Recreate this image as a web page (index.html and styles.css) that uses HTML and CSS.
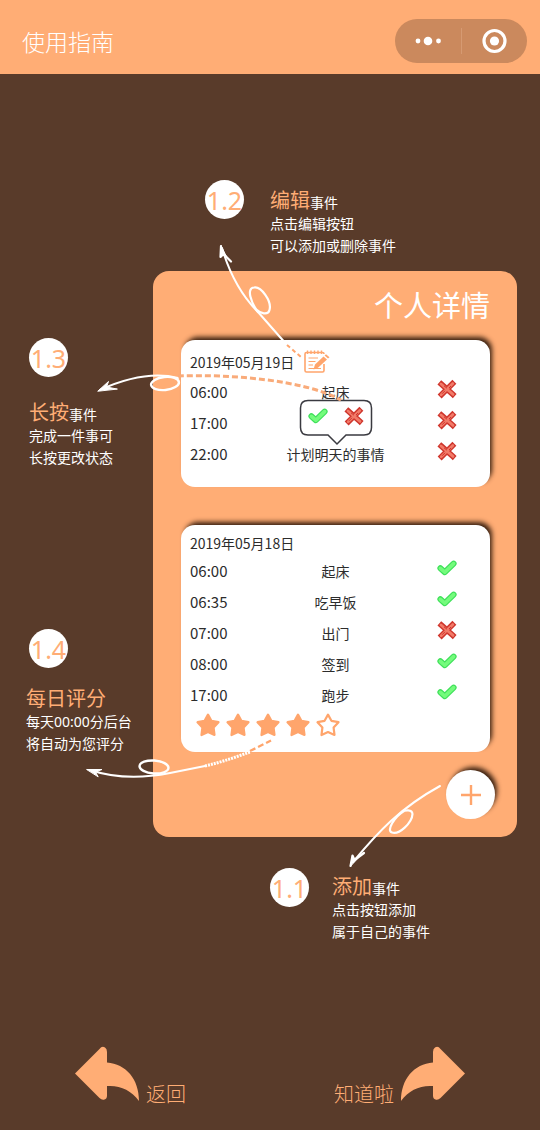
FILE: index.html
```html
<!DOCTYPE html>
<html lang="zh-CN">
<head>
<meta charset="utf-8">
<meta name="viewport" content="width=device-width, initial-scale=1">
<title>使用指南</title>
<link rel="stylesheet" href="styles.css">
</head>
<body>
<svg class="sprite" aria-hidden="true">
  <symbol id="check" viewBox="0 0 20 20">
    <path d="M3.4 10.3 7.8 14.2 16.6 5.6" fill="none" stroke="#3fe05a" stroke-width="6" stroke-linecap="round" stroke-linejoin="round"/>
    <path d="M3.4 10.3 7.8 14.2 16.6 5.6" fill="none" stroke="#74fb7c" stroke-width="3.6" stroke-linecap="round" stroke-linejoin="round"/>
  </symbol>
  <symbol id="cross" viewBox="0 0 20 20">
    <path d="M4.400 5.200 15.600 15.200M15.400 4.800 4.600 15.600" fill="none" stroke="#cf362d" stroke-width="5.600" stroke-linecap="square" stroke-linejoin="round"/>
    <path d="M4 5 16 15.400M15.800 4.600 4.200 15.800" fill="none" stroke="#f27a68" stroke-width="2.800" stroke-linecap="round"/>
    <path d="M7 6.800l3 2.400M5 14.800l3-3M12 9l2-2" fill="none" stroke="#cf362d" stroke-width="1"/>
  </symbol>
  <symbol id="star" viewBox="0 0 26 26">
    <path d="M13 2.600 16.400 8.800 23.500 10.200 18.600 15.600 19.500 23 13 20 6.500 23 7.400 15.600 2.500 10.200 9.600 8.800Z" stroke="#ffa56c" stroke-width="2.200" stroke-linejoin="round"/>
  </symbol>
  <symbol id="turn" viewBox="0 0 66 56">
    <path d="M1 27.500 25.500 3Q28-.500 31 1.500 33 2.500 33 6V16.500C52 18 65 33 65 55 57 44 46 39 33 40V49.500Q33 53 30.500 53.500 28 54.500 25.500 52Z" fill="#ffad75"/>
  </symbol>
</svg>

<header class="topbar">
  <h1 class="topbar-title">使用指南</h1>
  <div class="capsule">
    <button class="capsule-btn" type="button" aria-label="更多">
      <svg width="28" height="12" viewBox="0 0 28 12"><g fill="#fff"><circle cx="4" cy="6" r="2.400"/><circle cx="14" cy="6" r="4.300"/><circle cx="24.500" cy="6" r="2.400"/></g></svg>
    </button>
    <button class="capsule-btn" type="button" aria-label="关闭">
      <svg width="26" height="26" viewBox="0 0 26 26"><circle cx="13.500" cy="13" r="10.500" fill="none" stroke="#fff" stroke-width="3.200"/><circle cx="13.500" cy="13" r="4.600" fill="#fff"/></svg>
    </button>
  </div>
</header>

<main class="guide">
  <section class="hint hint-edit">
    <span class="badge">1.2</span>
    <div class="hint-text">
      <h2 class="hint-title">编辑<small>事件</small></h2>
      <p>点击编辑按钮</p>
      <p>可以添加或删除事件</p>
    </div>
  </section>

  <div class="stage">
    <div class="side">
      <section class="hint-stack hint-press">
        <span class="badge">1.3</span>
        <div class="hint-text">
          <h2 class="hint-title">长按<small>事件</small></h2>
          <p>完成一件事可</p>
          <p>长按更改状态</p>
        </div>
      </section>
      <section class="hint-stack hint-score">
        <span class="badge">1.4</span>
        <div class="hint-text">
          <h2 class="hint-title">每日评分</h2>
          <p>每天00:00分后台</p>
          <p>将自动为您评分</p>
        </div>
      </section>
    </div>

    <div class="panel">
      <h2 class="panel-title">个人详情</h2>

      <article class="card card-today">
        <div class="card-head">
          <time datetime="2019-05-19">2019年05月19日</time>
          <button class="edit" type="button" aria-label="编辑">
            <svg width="28" height="24" viewBox="0 0 28 24" fill="none" stroke="#ffa56c">
              <path d="M21 14V20.500Q21 22 19.500 22H3.500Q2 22 2 20.500V4Q2 2.500 3.500 2.500H19.500Q21 2.500 21 4" stroke-width="1.600"/>
              <path d="M4.500 .500V4M8 .500V4M11.500 .500V4M15 .500V4M18.500 .500V4" stroke-width="1.400"/>
              <path d="M5.500 8H15M5.500 11.500H12.500M5.500 15H10M5.500 18.500H18" stroke-width="1"/>
              <path d="M10.500 19.500 12 14.500 20.500 6.500 24 9.500 15 17.800ZM21.600 5.500 23 4.200 26.500 7.200 25 8.600Z" fill="#ffa56c" stroke="none"/>
            </svg>
          </button>
        </div>
        <table class="log">
          <tbody>
            <tr><td class="log-time">06:00</td><td class="log-name">起床</td><td class="log-mark"><svg role="img" aria-label="未完成"><use href="#cross"/></svg></td></tr>
            <tr><td class="log-time">17:00</td><td class="log-name">
              <div class="picker">
                <svg class="picker-frame" viewBox="0 0 74 50"><path d="M9 1.500H65Q72.500 1.500 72.500 9V28.500Q72.500 36 65 36H47L38 45 29 36H9Q1.500 36 1.500 28.500V9Q1.500 1.500 9 1.500Z" fill="#fff" stroke="#3a3a40" stroke-width="1.500"/></svg>
                <button class="picker-btn" type="button" aria-label="完成"><svg><use href="#check"/></svg></button>
                <button class="picker-btn" type="button" aria-label="未完成"><svg><use href="#cross"/></svg></button>
              </div>
            </td><td class="log-mark"><svg role="img" aria-label="未完成"><use href="#cross"/></svg></td></tr>
            <tr><td class="log-time">22:00</td><td class="log-name">计划明天的事情</td><td class="log-mark"><svg role="img" aria-label="未完成"><use href="#cross"/></svg></td></tr>
          </tbody>
        </table>
      </article>

      <article class="card card-past">
        <div class="card-head">
          <time datetime="2019-05-18">2019年05月18日</time>
        </div>
        <table class="log">
          <tbody>
            <tr><td class="log-time">06:00</td><td class="log-name">起床</td><td class="log-mark"><svg role="img" aria-label="完成"><use href="#check"/></svg></td></tr>
            <tr><td class="log-time">06:35</td><td class="log-name">吃早饭</td><td class="log-mark"><svg role="img" aria-label="完成"><use href="#check"/></svg></td></tr>
            <tr><td class="log-time">07:00</td><td class="log-name">出门</td><td class="log-mark"><svg role="img" aria-label="未完成"><use href="#cross"/></svg></td></tr>
            <tr><td class="log-time">08:00</td><td class="log-name">签到</td><td class="log-mark"><svg role="img" aria-label="完成"><use href="#check"/></svg></td></tr>
            <tr><td class="log-time">17:00</td><td class="log-name">跑步</td><td class="log-mark"><svg role="img" aria-label="完成"><use href="#check"/></svg></td></tr>
          </tbody>
        </table>
        <div class="stars" role="img" aria-label="4 / 5">
          <svg class="star"><use href="#star"/></svg>
          <svg class="star"><use href="#star"/></svg>
          <svg class="star"><use href="#star"/></svg>
          <svg class="star"><use href="#star"/></svg>
          <svg class="star star-empty"><use href="#star"/></svg>
        </div>
      </article>

      <button class="add" type="button" aria-label="添加">
        <svg width="22" height="22" viewBox="0 0 22 22"><path d="M11 1V21M1 11H21" stroke="#ffa56c" stroke-width="2.400"/></svg>
      </button>

      <svg class="arrows" viewBox="80 230 380 650" fill="none" stroke="#fff" stroke-width="2" stroke-linecap="round" stroke-linejoin="round" aria-hidden="true">
        <path d="M222 248C230 275 242 296 258 312L287 345"/>
        <path d="M258 312C251 303 246 288 254 287.500C261 286 272 301 269.500 310C268 316 260 313 257 310" stroke-width="2.200"/>
        <path d="M221 246 220.500 257 223.500 254 231 261.500" stroke-width="2.200"/>
        <path d="M221 246 220.500 257 223.500 254 226 256Z" fill="#fff" stroke-width="1"/>
        <path d="M287 345 301 357" stroke="#ffa56c" stroke-dasharray="4 3" stroke-linecap="butt"/>

        <path d="M100 390C122 380 150 371 178 378"/>
        <ellipse cx="165" cy="383.500" rx="14" ry="6.500" transform="rotate(-6 165 383.500)" stroke-width="2.400"/>
        <path d="M98 391 108.500 381.500 106.500 387 117 389Z" fill="#fff" stroke-width="1"/>
        <path d="M178 376C230 374 305 380 341 400" stroke="#f9ab7a" stroke-width="3" stroke-dasharray="6 3" stroke-linecap="butt"/>

        <path d="M90 770C120 780 150 777 170 773L205 766"/>
        <ellipse cx="154" cy="767" rx="14.500" ry="6.500" transform="rotate(4 154 767)" stroke-width="2.400"/>
        <path d="M87 769.500 102 769.500 95.500 772 98 776.500Z" fill="#fff" stroke-width="1"/>
        <path d="M205 766C222 762 236 757 250 752" stroke-width="3" stroke-dasharray="2 1" stroke-linecap="butt"/>
        <path d="M250 751 271 740.500" stroke="#ffa56c" stroke-width="2.400" stroke-dasharray="6 3" stroke-linecap="butt"/>

        <path d="M440 786C400 808 378 832 353 862"/>
        <path d="M404 811C394 817 386 831 392 832.500C399 835 412 823 412.500 814C412 809 405 810 402 812" stroke-width="2.200"/>
        <path d="M350.500 866 352.500 855.500 354.500 860 364 853" stroke-width="2.200"/>
        <path d="M350.500 866 352.500 855.500 354.500 860 358 858Z" fill="#fff" stroke-width="1"/>
      </svg>
    </div>
  </div>

  <section class="hint hint-add">
    <span class="badge">1.1</span>
    <div class="hint-text">
      <h2 class="hint-title">添加<small>事件</small></h2>
      <p>点击按钮添加</p>
      <p>属于自己的事件</p>
    </div>
  </section>
</main>

<nav class="pager">
  <a class="pager-link" href="#back"><svg class="turn"><use href="#turn"/></svg>返回</a>
  <a class="pager-link" href="#done">知道啦<svg class="turn turn-next"><use href="#turn"/></svg></a>
</nav>
</body>
</html>
```
FILE: styles.css
```css
* {
  box-sizing: border-box;
}

body {
  display: flex;
  flex-direction: column;
  min-height: 100vh;
  margin: 0;
  background: #593b2a;
  color: #fff;
  font-family: "Noto Sans", "Noto Sans CJK SC", sans-serif;
  font-size: 14px;
  line-height: 22px;
}

h1,
h2,
p {
  margin: 0;
  font-weight: 400;
}

button {
  padding: 0;
  border: 0;
  background: none;
  cursor: pointer;
}

svg {
  display: block;
}

.sprite {
  position: absolute;
  width: 0;
  height: 0;
}

/* Top bar */
.topbar {
  display: flex;
  align-items: center;
  justify-content: space-between;
  height: 74px;
  padding: 8px 13px 0 22px;
  background: #ffad75;
}

.topbar-title {
  font-family: "Noto Sans CJK SC", sans-serif;
  font-size: 23px;
  font-weight: 300;
  line-height: 32px;
}

.capsule {
  display: flex;
  align-items: center;
  width: 132px;
  height: 44px;
  border-radius: 22px;
  background: #cb895d;
}

.capsule-btn {
  display: flex;
  flex: 1;
  align-items: center;
  justify-content: center;
  height: 26px;
}

.capsule-btn + .capsule-btn {
  border-left: 1px solid #d69a72;
}

/* Hints */
.guide {
  padding-top: 106px;
}

.hint {
  display: flex;
  align-items: flex-start;
}

.hint-edit {
  gap: 26px;
  padding: 0 0 14px 205px;
}

.hint-edit .hint-text {
  padding-top: 9px;
}

.hint-add {
  gap: 23px;
  padding: 31px 0 0 270px;
}

.hint-add .hint-text {
  padding-top: 7px;
}

.hint-press {
  padding: 67px 0 0 29px;
}

.hint-score {
  padding: 160px 0 0 26px;
}

.hint-press .hint-text {
  padding-top: 24px;
}

.hint-score .hint-text {
  padding-top: 19px;
}

.hint-score .badge {
  margin-left: 3px;
}

.badge {
  display: flex;
  align-items: center;
  justify-content: center;
  width: 39px;
  height: 39px;
  border-radius: 50%;
  background: #fff;
  color: #ffad75;
  font-size: 25px;
}

.hint-text {
  white-space: nowrap;
}

.hint-title {
  height: 24px;
  color: #ffad75;
  font-size: 20px;
  line-height: 24px;
}

.hint-title small {
  color: #fff;
  font-size: 14px;
}

/* Panel */
.stage {
  display: grid;
  grid-template-columns: 153px 1fr;
  padding-right: 23px;
}

.panel {
  position: relative;
  display: flex;
  flex-direction: column;
  padding: 13px 27px 18px 28px;
  border-radius: 16px;
  background: #ffad75;
}

.panel-title {
  align-self: flex-end;
  margin-bottom: 16px;
  font-family: "Noto Sans CJK SC", sans-serif;
  font-size: 29px;
  line-height: 40px;
}

.card {
  border-radius: 14px;
  background: #fff;
  box-shadow: 3px -4px 5px -1px #3a2010;
  color: #2c2c2c;
  font-family: "Noto Sans CJK SC", sans-serif;
}

.card-today {
  margin-bottom: 38px;
  padding: 10px 0 18px;
}

.card-past {
  margin-bottom: 18px;
  padding: 6px 0 12px;
}

.card-head {
  display: flex;
  align-items: center;
  gap: 9px;
  height: 24px;
  padding-left: 9px;
}

.log {
  width: 100%;
  border-collapse: collapse;
  table-layout: fixed;
}

.card-today .log {
  margin-top: 2px;
}

.log td {
  height: 31px;
  padding: 0;
}

.log .log-time {
  width: 30%;
  padding-left: 9px;
  font-size: 15px;
}

.log-name {
  position: relative;
  text-align: center;
}

.log .log-mark {
  width: 30%;
  padding: 0 0 6px 40px;
}

.log-mark svg,
.picker-btn svg {
  width: 20px;
  height: 20px;
}

.picker {
  position: absolute;
  top: -8px;
  left: 50%;
  display: flex;
  justify-content: space-between;
  width: 74px;
  height: 50px;
  padding: 7px 9px 0 9px;
  transform: translateX(-50%);
}

.picker-frame {
  position: absolute;
  inset: 0;
  width: 74px;
  height: 50px;
}

.picker-btn {
  position: relative;
  height: 20px;
}

.stars {
  display: flex;
  gap: 4px;
  padding: 2px 0 2px 14px;
}

.star {
  width: 26px;
  height: 26px;
  fill: #ffa56c;
}

.star-empty {
  fill: #fff;
}

.add {
  display: flex;
  align-items: center;
  justify-content: center;
  align-self: flex-end;
  width: 49px;
  height: 49px;
  margin-right: -5px;
  border-radius: 50%;
  background: #fff;
  box-shadow: 3px -4px 5px -1px #3a2010;
}

.arrows {
  position: absolute;
  top: -41px;
  left: -73px;
  width: 380px;
  height: 650px;
  pointer-events: none;
}

/* Bottom links */
.pager {
  display: flex;
  justify-content: space-between;
  margin-top: auto;
  padding: 24px 74px 28px;
}

.pager-link {
  display: flex;
  align-items: flex-end;
  gap: 6px;
  color: #ffad75;
  font-family: "Noto Sans CJK SC", sans-serif;
  font-size: 20px;
  font-weight: 300;
  line-height: 16px;
  text-decoration: none;
}

.turn {
  width: 66px;
  height: 56px;
}

.turn-next {
  transform: scaleX(-1);
}
```
